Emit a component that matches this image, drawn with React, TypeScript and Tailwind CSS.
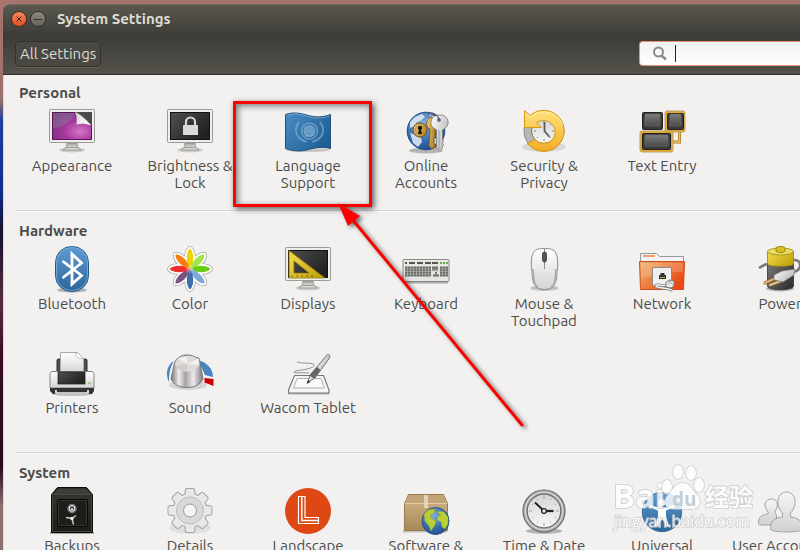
import React from "react";

type Item = { label: string; icon: React.ReactNode };

const Monitor = ({ children }: { children: React.ReactNode }) => (
  <>
    <ellipse cx="24" cy="43" rx="13" ry="2.5" fill="#000" opacity="0.15" />
    <path d="M19 36h10l1 5H18z" fill="url(#stand)" stroke="#8f918d" strokeWidth="0.7" />
    <path d="M15 43c1-2 3-2.5 5-2.5h8c2 0 4 .5 5 2.5z" fill="#dcdedb" stroke="#888a85" strokeWidth="0.8" />
    <rect x="1.5" y="2.5" width="45" height="33" rx="1" fill="#eeeeec" stroke="#999b97" />
    <rect x="4" y="5" width="40" height="28" fill="#1b1b1b" />
    {children}
  </>
);

const appearance = (
  <Monitor>
    <rect x="4.5" y="5.5" width="39" height="27" fill="url(#plum)" stroke="#5c1358" />
    <path d="M5 6h22c-3 9-12 13-22 16z" fill="#8d8aa0" opacity="0.4" />
    <path d="M27 5h17v13z" fill="#4a4a4a" />
    <path d="M27 5c2 4 2 8 1.5 12.5C33 16 38 16.5 43.5 18.5 38 13 33 7 27 5z" fill="url(#paper)" />
  </Monitor>
);

const brightness = (
  <Monitor>
    <rect x="4.5" y="5.5" width="39" height="27" fill="url(#dark)" stroke="#111" />
    <path d="M20 19v-4a4.5 4.5 0 0 1 9 0v4" fill="none" stroke="#d8d8d8" strokeWidth="2.2" />
    <rect x="17" y="18" width="15" height="10" rx="0.6" fill="#dadada" />
  </Monitor>
);

const language = (
  <>
    <ellipse cx="24" cy="43" rx="22" ry="2" fill="#000" opacity="0.18" />
    <path
      d="M1.5 7.5c8-3 16-1 23 1s14 2 22-1v34c-8-2-15-1-22 1s-15 2-23-1z"
      fill="url(#flag)"
      stroke="#1f4f7a"
    />
    <path d="M2.5 8.5c8-3 15-1 22 1s14 2 21-.5" fill="none" stroke="#7fb0d8" strokeWidth="0.8" />
    <g fill="none" stroke="#8db8da" opacity="0.6">
      <circle cx="25.5" cy="24" r="8" strokeWidth="1.4" />
      <circle cx="25.5" cy="24" r="5" strokeWidth="2" />
      <path d="M17.5 24h16M20 18.5l11 11M31 18.5l-11 11" strokeWidth="0.7" />
      <path d="M15 15c-6 8-3 17 8 20M36 15c6 8 3 17-8 20" strokeWidth="1.8" />
    </g>
    <path d="M22 20h6l3 5-3 5h-6l-2-5z" fill="#8db8da" opacity="0.5" />
  </>
);

const online = (
  <>
    <ellipse cx="24" cy="43.5" rx="17" ry="3" fill="#000" opacity="0.25" />
    <circle cx="24" cy="24" r="18.8" fill="url(#globe)" stroke="#204a87" />
    <path
      d="M8 15l5-5 7-3 3 3-5 4-3 1-2 4-5 2zM8 26l6 2 5 3 1 4-4 5-5-4zM27 7l8 3 4 6-5-1-6 2-4-4 5-3zM28 31l8 1-3 6-5 3z"
      fill="#dce7f2"
      opacity="0.9"
    />
    <circle cx="18" cy="23" r="7" fill="url(#gold)" stroke="#6f5014" />
    <circle cx="18" cy="23" r="4.6" fill="none" stroke="#b98f33" />
    <path d="M18 19a2 2 0 0 0-1 3.8L16 27h4l-1-4.2A2 2 0 0 0 18 19z" fill="#1d1608" />
    <path
      d="M30 10c-5 1-7 7-4 11l2 1-1 17 3 3 3-2v-3l-2-1 2-2-2-2 2-2V20z"
      fill="url(#gold)"
      stroke="#735413"
      strokeWidth="0.8"
    />
    <path
      d="M37 8a8 7.5 0 0 0-4 14l1.5 1v18l3 3 3-3v-2l1-1-1-2 1-2-1-2V23l1.5-1A8 7.5 0 0 0 37 8z"
      fill="url(#metal)"
      stroke="#777"
      strokeWidth="0.8"
    />
    <path d="M37 23v19" stroke="#8c8c8c" strokeWidth="0.8" />
    <circle cx="37" cy="13" r="1.9" fill="#5c6a77" />
    <path d="M26 8c2-4 10-2 11 5M29 9c4-2 8 0 8 4" fill="none" stroke="#555" strokeWidth="0.9" />
  </>
);

const security = (
  <>
    <ellipse cx="24" cy="40" rx="22" ry="5" fill="#000" opacity="0.1" />
    <circle cx="24" cy="24" r="20" fill="#b5b7b4" stroke="#888a85" />
    <circle cx="24" cy="24" r="12.5" fill="url(#face)" stroke="#96732a" />
    <path d="M24 14v2M24 32v2M32 24h2M14 24h2M17 31l1-1M31 31l-1-1M31 17l-1 1" stroke="#888" />
    <path d="M24.5 15v9l5 6" fill="none" stroke="#5a5c5a" strokeWidth="1.8" />
    <path
      d="M4.5 3.5v17h17l-5-4.5a11.5 11.5 0 1 1-1.5 16.5l-7.5 4A20.5 20.5 0 1 0 10 8.5z"
      fill="url(#yellow)"
      stroke="#d79a18"
    />
    <path d="M5.8 6.5l4.5 4C22 .5 38 5 42.5 18" fill="none" stroke="#fff0b0" strokeWidth="1" />
  </>
);

const textEntry = (
  <>
    <path d="M35 35h6.500V25" fill="none" stroke="#a17b2c" strokeWidth="3" />
    <path d="M35 35h6.500V25" fill="none" stroke="#f3c35a" strokeWidth="1.5" />
    <rect x="27" y="4" width="20" height="21" rx="2" fill="#e9a92b" stroke="#b5a373" />
    <rect x="2" y="24" width="33" height="21" rx="2" fill="#e9a92b" stroke="#b5a373" />
    <g fill="#3a3a3a" stroke="#202020">
      <rect x="4.5" y="5.5" width="20" height="17" rx="1" />
      <rect x="29.5" y="6.5" width="16" height="16" rx="1" />
      <rect x="4.5" y="26.5" width="28" height="16" rx="1" />
    </g>
    <g fill="url(#key)" stroke="#6e6e6e" strokeWidth="0.7">
      <rect x="7" y="7" width="15" height="12" rx="1" />
      <rect x="32" y="7" width="11" height="12" rx="1" />
      <rect x="7" y="28" width="23" height="11" rx="1" />
    </g>
  </>
);

const bluetooth = (
  <>
    <ellipse cx="24" cy="45" rx="15" ry="2.5" fill="#000" opacity="0.25" />
    <rect x="7.5" y="1.5" width="33" height="45" rx="16" fill="url(#bt)" stroke="#1f5a8e" />
    <rect x="8.5" y="2.5" width="31" height="43" rx="15" fill="none" stroke="#8ab6dd" opacity="0.7" />
    <path d="M14.5 16l19 14.5-9.500 8.500V9l9.500 9-19 15" fill="none" stroke="#fff" strokeWidth="2.8" />
  </>
);

const petals = ["#edd400", "#a5e34a", "#68cc12", "#7fa9d8", "#3f6fb0", "#7b557f", "#ef2f2f", "#f57f0a"];
const petal = "M24 25C19 16 20.5 6 24 3.5C27.5 6 29 16 24 25Z";

const color = (
  <>
    <g fill="#aaa" stroke="#aaa" strokeWidth="5" strokeLinejoin="round">
      {petals.map((c, i) => (
        <path key={c} d={petal} transform={`rotate(${i * 45} 24 24)`} />
      ))}
    </g>
    <g fill="#fff" stroke="#fff" strokeWidth="3.5" strokeLinejoin="round">
      {petals.map((c, i) => (
        <path key={c} d={petal} transform={`rotate(${i * 45} 24 24)`} />
      ))}
    </g>
    {petals.map((c, i) => (
      <path key={c} d={petal} fill={c} transform={`rotate(${i * 45} 24 24)`} />
    ))}
    <circle cx="24" cy="24" r="5" fill="url(#glow)" />
  </>
);

const displays = (
  <Monitor>
    <rect x="4.5" y="5.5" width="39" height="27" fill="url(#dark)" stroke="#111" />
    <path
      d="M5 5.5V33h36zM10 16v12h15z"
      fillRule="evenodd"
      fill="url(#ruler)"
      stroke="#8a7106"
      strokeWidth="0.8"
    />
    <path d="M8 32v-2M13 32v-2M18 32v-2M23 32v-2M28 32v-2" stroke="#6b5800" strokeWidth="0.9" />
  </Monitor>
);

const keyboard = (
  <>
    <path d="M2 37.5h44" stroke="#000" opacity="0.3" strokeWidth="2" />
    <rect x="1" y="14.5" width="46" height="22" rx="1" fill="#e6e7e4" stroke="#8a8c88" />
    <path d="M3 18h2M7 18h6M15 18h6M23 18h6M30 18h6" stroke="#555753" strokeWidth="1.8" />
    <path d="M38 18h2M41 18h2M44 18h2" stroke="#6aa84f" strokeWidth="1.8" />
    <path d="M3 21.5h26v10H3zM38 21.5h8v10h-8zM30 21.5h6v4h-6zM33 27h2v2.5h2v2h-6v-2h2z" fill="#6b6d69" />
    <path d="M3 24h43M3 26.5h43M3 29h43" stroke="#c9cac7" strokeWidth="0.5" />
    <path
      d="M5.5 21v11M8.5 21v11M11.5 21v11M14.5 21v11M17.5 21v11M20.5 21v11M23.5 21v11M26.5 21v11M40.5 21v11M43.5 21v11"
      stroke="#c9cac7"
      strokeWidth="0.5"
    />
  </>
);

const mouse = (
  <>
    <ellipse cx="24.5" cy="43" rx="14" ry="3" fill="#000" opacity="0.2" />
    <path
      d="M24.5 3.5c8 0 11 1.5 12.5 8 1 5 1 10 0 15-.5 5 .5 18-12.5 18S12.5 31.5 12 26.5c-1-5-1-10 0-15 1.5-6.5 4.5-8 12.5-8z"
      fill="url(#shell)"
      stroke="#85878a"
    />
    <path d="M13 24c1 8 0 16 5 18M36 24c-1 8 0 16-5 18" fill="none" stroke="#aaa" strokeWidth="1.5" />
    <path d="M24.5 4v20" stroke="#888" />
    <rect x="22.5" y="7" width="4" height="10" rx="2" fill="#555" stroke="#333" strokeWidth="0.8" />
  </>
);

const network = (
  <>
    <path d="M2.5 20V8.5h16l3 3h24V20z" fill="#f3f3f3" stroke="#999" />
    <path d="M5 11h12" stroke="#f0a070" strokeWidth="2" />
    <path d="M1.5 16.5h45l-1 28h-43z" fill="url(#folder)" stroke="#c8511f" />
    <path d="M3 18h42l-.5 9C30 26 15 32 3 33z" fill="#fff" opacity="0.18" />
    <rect x="14.5" y="22.5" width="19" height="18" rx="1.5" fill="#f0f0ee" stroke="#8b8b88" />
    <path d="M21 34v-4h1.5v-2h4v2H28v4z" fill="#333" />
    <path d="M22 32.5h5" stroke="#b5a64a" />
    <path d="M30 39c-5 4-12-1-12 2s14 1 17 5" fill="none" stroke="#777" strokeWidth="2.8" />
    <path d="M30 39c-5 4-12-1-12 2s14 1 17 5" fill="none" stroke="#f4f4f4" strokeWidth="1.5" />
    <path d="M28 37l4-2 4 1v5l-3 2-5-1z" fill="#ececec" stroke="#777" />
    <path d="M31 36l4 4M34 35l-4 5" stroke="#999" strokeWidth="0.8" />
  </>
);

const power = (
  <>
    <ellipse cx="24" cy="43.5" rx="14" ry="3" fill="#000" opacity="0.25" />
    <path d="M11 19c-4 1-4 2-8 4" fill="none" stroke="#777" strokeWidth="2.5" />
    <path d="M37 15c8-1 10 8 2 12" fill="none" stroke="#777" strokeWidth="2.5" />
    <path d="M11.5 18h26v23c0 5-26 5-26 0z" fill="url(#cell)" stroke="#333" strokeWidth="0.8" />
    <path d="M11.5 6v13c0 3 26 3 26 0V6z" fill="url(#ruler)" stroke="#9b8609" strokeWidth="0.8" />
    <ellipse cx="24.5" cy="6.5" rx="13" ry="3.5" fill="#e8dc66" stroke="#9b8609" strokeWidth="0.8" />
    <path d="M20 3v3c0 2 9 2 9 0V3c0-2-9-2-9 0z" fill="#d9bd21" stroke="#8a7507" strokeWidth="0.8" />
    <path d="M20 33l-11 5M25 36l-11 4" stroke="#9a6a35" strokeWidth="3.2" strokeLinecap="round" />
    <path d="M20 33l-11 5M25 36l-11 4" stroke="#e8bd86" strokeWidth="1.9" strokeLinecap="round" />
    <path d="M18 30l8-4 13-2-1 6-11 7-9-2z" fill="url(#metal)" stroke="#777" strokeWidth="0.8" />
  </>
);

const printers = (
  <>
    <ellipse cx="24" cy="45" rx="20" ry="2" fill="#000" opacity="0.2" />
    <rect x="9" y="10" width="30" height="16" rx="1.5" fill="#4a4c4a" stroke="#2b2b2b" />
    <path d="M12.5 3.5h17l6 6V24h-23z" fill="url(#shell)" stroke="#aaa" />
    <path d="M28 4c-1 4 2 6 7.5 5.5L30 4z" fill="#fff" stroke="#aaa" strokeWidth="0.8" />
    <path d="M3.5 22.5h41l1.5 2V39H2V24.5z" fill="url(#shell)" stroke="#858783" />
    <rect x="10" y="23" width="27" height="12" fill="url(#dark)" stroke="#252525" strokeWidth="0.8" />
    <circle cx="41.5" cy="34" r="1.3" fill="#8bd36a" />
    <path d="M2 39h44v3l-2 3H5l-3-3z" fill="#333" />
    <path d="M8 41v3h32v-3" fill="none" stroke="#f5f5f5" strokeWidth="1.7" />
  </>
);

const sound = (
  <>
    <ellipse cx="22" cy="36" rx="19" ry="5" fill="#000" opacity="0.12" />
    <path d="M3 33C-1 25 1 16 8 12 4 18 3 25 3 33z" fill="#4c83c3" />
    <path d="M32 11c8 2 15 8 15 17l-8-2z" fill="#4c83c3" />
    <path d="M38.5 29l9 1v7l-9-3.5z" fill="#cc0000" />
    <path
      d="M8.5 14C11 8 16 6 21 6c4 0 7 1 9 2.5l3 .5 1 5 3 16c-3 6-9 8.5-16 8.5S8 36 5 30z"
      fill="url(#knob)"
      stroke="#777"
    />
    <path d="M9 15c1-5 6-8 12-8 4 0 7 1 9 2.5h3l.5 6c-3 5-7 7-12.5 7S10 20 9 15z" fill="#dedcda" />
    <path d="M21 15l11-5 1 6zM21 15L12 10l9-3z" fill="#fff" opacity="0.6" />
    <path d="M21 15L10 17c2 4 6 5 11 5z" fill="#c5c1bf" opacity="0.6" />
  </>
);

const wacom = (
  <>
    <path d="M4 44.5h41" stroke="#000" strokeWidth="2" opacity="0.25" />
    <path d="M10.5 26.5h29L45 41v3H4.5v-3z" fill="#f5f5f3" stroke="#777" strokeWidth="1.2" />
    <path d="M13 29.5h24l3.5 9.5H9.5z" fill="#fafafa" stroke="#b0b0b0" />
    <path d="M13 13c6 2 20 0 17 4-3 4-19 4-20 6s8 0 15 1" fill="none" stroke="#888" strokeWidth="0.9" />
    <path d="M23.5 33.5l3-8L42 7c2-3 5-1 3.5 2L31 29z" fill="url(#metal)" stroke="#666" strokeWidth="0.9" />
    <path d="M26 26.5l7-8 3 2.5-6 8z" fill="#666" stroke="#444" strokeWidth="0.6" />
    <path d="M22.5 35l1.5-4 2.5 2z" fill="#333" />
  </>
);

const backups = (
  <>
    <path d="M2 46h44" stroke="#000" strokeWidth="2" opacity="0.3" />
    <path d="M9.5.5h29l6 7v38h-41v-38z" fill="#242420" stroke="#0c0c0b" />
    <path d="M10 1.5h28l5 6H5z" fill="#3d3d39" />
    <rect x="4.5" y="7.5" width="39" height="37" fill="url(#safe)" stroke="#55554f" strokeWidth="0.7" />
    <rect x="9.5" y="12.5" width="30" height="27" rx="1.5" fill="#1d1d1a" stroke="#090909" />
    <rect x="10.5" y="13.5" width="28" height="25" rx="1" fill="none" stroke="#44443f" strokeWidth="0.6" />
    <circle cx="24" cy="21.5" r="4.3" fill="#555" stroke="#999" strokeWidth="0.8" />
    <circle cx="24" cy="21.5" r="2.6" fill="#181818" stroke="#ddd" strokeWidth="1.3" />
    <circle cx="24" cy="22" r="1.1" fill="#fff" />
    <path d="M24 31.5l-6-1M24 31.5l4-3M24 31.5l1.5 6" stroke="#c8c8c8" strokeWidth="1.5" />
    <circle cx="24" cy="31.5" r="1.7" fill="#eee" />
  </>
);

const teeth = [0, 45, 90, 135, 180, 225, 270, 315];

const details = (
  <>
    <ellipse cx="24" cy="41" rx="21" ry="6" fill="#000" opacity="0.07" />
    <g fill="#e8e8e7" stroke="#a6a6a5" strokeWidth="2" strokeLinejoin="round">
      {teeth.map((a) => (
        <path key={a} d="M19 9l1-6.500 1-.5h6l1 .5 1 6.500z" transform={`rotate(${a} 24 23.5)`} />
      ))}
      <circle cx="24" cy="23.5" r="16.5" />
    </g>
    <g fill="#e8e8e7">
      {teeth.map((a) => (
        <path key={a} d="M19 11l1-8.500 1-.5h6l1 .5 1 8.500z" transform={`rotate(${a} 24 23.5)`} />
      ))}
      <circle cx="24" cy="23.5" r="16.5" />
    </g>
    <circle cx="24" cy="23.5" r="13.5" fill="#d9d9d8" stroke="#bcbcbb" />
    <circle cx="24" cy="23.5" r="6.5" fill="#f5f5f4" stroke="#9b9b9a" />
  </>
);

const landscape = (
  <>
    <circle cx="24" cy="24" r="23" fill="#dd4814" />
    <path d="M14.5 9.5H21v21h13.5v6h-20z" fill="none" stroke="#fff" strokeWidth="1.2" />
    <path d="M17.8 10v23.5H34" fill="none" stroke="#fff" strokeWidth="1.5" />
  </>
);

const software = (
  <>
    <path d="M1 44h44" stroke="#000" strokeWidth="3" opacity="0.2" />
    <path d="M6.5 7.5h35l4 9v27h-43v-27z" fill="url(#box)" stroke="#9b7b4e" />
    <path d="M6.5 8h35l3.5 8.5H3z" fill="#c3a378" />
    <path d="M3 16.5h42" stroke="#e3cba4" />
    <path d="M22 8h4v13h-4z" fill="#e6d8bd" opacity="0.9" />
    <circle cx="33.5" cy="34" r="13.5" fill="url(#globe)" stroke="#234f87" />
    <path
      d="M22 27l4-4 7-1-1 4-4 2 1 3 5 3-1 4-4 6-2-5-4-5zM37 24l5 1 4 5v7l-3 5-3-2-1-5-4-2 1-4 3-1-3-2z"
      fill="#b9cf35"
      stroke="#8aa51f"
      strokeWidth="0.5"
    />
  </>
);

const time = (
  <>
    <ellipse cx="24" cy="44" rx="18" ry="3" fill="#000" opacity="0.25" />
    <circle cx="24" cy="24" r="21" fill="#a8aaa8" stroke="#6a6c6a" strokeWidth="1.2" />
    <circle cx="24" cy="24" r="18.8" fill="none" stroke="#d0d1d0" strokeWidth="1.5" />
    <circle cx="24" cy="24" r="16.8" fill="url(#face)" stroke="#6c6e6c" strokeWidth="1.2" />
    <path
      d="M24 9v3M24 36v3M9 24h3M36 24h3M17 12l.7 1M31 12l-.7 1M36 17l-1 .7M12 17l1 .7M12 31l1-.7M36 31l-1-.7M17 36l.7-1M31 36l-.7-1"
      stroke="#999"
    />
    <path d="M24 24l-9-8.500" stroke="#222" strokeWidth="1.9" />
    <path d="M24 24h9.500" stroke="#222" strokeWidth="2.3" />
    <circle cx="24" cy="24" r="2.3" fill="#eee" stroke="#222" strokeWidth="1.3" />
  </>
);

const universal = (
  <>
    <circle cx="24" cy="25" r="19.7" fill="url(#bt)" stroke="#2a5f96" strokeWidth="0.8" />
    <circle cx="24" cy="15.5" r="3.3" fill="#fff" />
    <path
      d="M12 18l8 2.5h8l8-2.5.5 2-8.500 3.500v6l3 9.500-2.500 1L24 31l-4.500 9-2.500-1 3-9.500v-6L11.500 20z"
      fill="#fff"
    />
  </>
);

const users = (
  <g fill="url(#gear)" stroke="#a2a2a1">
    <path d="M2.5 36c0-6 3-8 9-9 1 0 1-1 0-3-5-6-2-12 4-12s8 6 3 13l2 3v10H5c-2 0-2.5-1-2.5-2z" />
    <path d="M14.5 42c0-8 4-11 12-12v-4c-8-8-5-21 4-21s12 13 4 21v4c8 1 12 4 12 12 0 4-32 4-32 0z" />
  </g>
);

const sections: { title: string; items: Item[] }[] = [
  {
    title: "Personal",
    items: [
      { label: "Appearance", icon: appearance },
      { label: "Brightness & Lock", icon: brightness },
      { label: "Language Support", icon: language },
      { label: "Online Accounts", icon: online },
      { label: "Security & Privacy", icon: security },
      { label: "Text Entry", icon: textEntry },
    ],
  },
  {
    title: "Hardware",
    items: [
      { label: "Bluetooth", icon: bluetooth },
      { label: "Color", icon: color },
      { label: "Displays", icon: displays },
      { label: "Keyboard", icon: keyboard },
      { label: "Mouse & Touchpad", icon: mouse },
      { label: "Network", icon: network },
      { label: "Power", icon: power },
      { label: "Printers", icon: printers },
      { label: "Sound", icon: sound },
      { label: "Wacom Tablet", icon: wacom },
    ],
  },
  {
    title: "System",
    items: [
      { label: "Backups", icon: backups },
      { label: "Details", icon: details },
      { label: "Landscape Service", icon: landscape },
      { label: "Software & Updates", icon: software },
      { label: "Time & Date", icon: time },
      { label: "Universal Access", icon: universal },
      { label: "User Accounts", icon: users },
    ],
  },
];

// id, start colour, end colour, vertical
const linear: [string, string, string, boolean][] = [
  ["stand", "#9a9c99", "#e8e9e7", true],
  ["paper", "#cfcfcf", "#ffffff", false],
  ["shell", "#ffffff", "#d2d3d2", true],
  ["flag", "#4c8cc4", "#1f6096", false],
  ["gold", "#f0cf7c", "#b78628", false],
  ["metal", "#fdfdfd", "#b9bbb9", false],
  ["yellow", "#ffe27a", "#f2ac26", true],
  ["face", "#d5d6d4", "#f7f7f6", true],
  ["key", "#7c7c7c", "#4a4a4a", true],
  ["bt", "#5f9bd3", "#2a6699", true],
  ["ruler", "#f3dc4c", "#c4a512", false],
  ["folder", "#efb069", "#ea4a12", false],
  ["cell", "#777777", "#333333", false],
  ["safe", "#33332f", "#1c1c19", true],
  ["gear", "#f6f6f6", "#d0d0cf", true],
  ["box", "#d3b78d", "#a98756", true],
  ["dark", "#505050", "#222222", false],
];

function Gradients() {
  return (
    <svg className="absolute h-0 w-0" aria-hidden="true">
      <defs>
        {linear.map(([id, from, to, vertical]) => (
          <linearGradient key={id} id={id} x1="0" y1="0" x2={vertical ? 0 : 1} y2={vertical ? 1 : 0.6}>
            <stop offset="0" stopColor={from} />
            <stop offset="1" stopColor={to} />
          </linearGradient>
        ))}
        <linearGradient id="knob">
          <stop offset="0" stopColor="#777" />
          <stop offset="0.25" stopColor="#eee" />
          <stop offset="0.45" stopColor="#a5a1a1" />
          <stop offset="0.7" stopColor="#f0e8f0" />
          <stop offset="1" stopColor="#777" />
        </linearGradient>
        <radialGradient id="plum" cx="0.7" cy="0.7" r="0.8">
          <stop offset="0" stopColor="#d277c6" />
          <stop offset="0.5" stopColor="#a8389f" />
          <stop offset="1" stopColor="#74337a" />
        </radialGradient>
        <radialGradient id="globe" cx="0.4" cy="0.3" r="0.8">
          <stop offset="0" stopColor="#86b0dd" />
          <stop offset="0.6" stopColor="#3269ad" />
          <stop offset="1" stopColor="#1f4882" />
        </radialGradient>
        <radialGradient id="glow">
          <stop offset="0" stopColor="#fff" stopOpacity="0.5" />
          <stop offset="1" stopColor="#fff" stopOpacity="0" />
        </radialGradient>
      </defs>
    </svg>
  );
}

function SettingsItem({ label, icon }: Item) {
  return (
    <button type="button" className="flex min-h-[84px] flex-col items-center gap-0.5">
      <svg viewBox="0 0 48 48" className="h-12 w-12 shrink-0" aria-hidden="true">
        {icon}
      </svg>
      <span className="max-w-[104px] text-center text-[15px] leading-[17px]">{label}</span>
    </button>
  );
}

function Annotation() {
  return (
    <>
      <div className="pointer-events-none absolute top-[101px] left-[233px] h-[106px] w-[139px] border-[3px] border-[#fe0000] shadow-[2px_2px_6px_rgba(0,0,0,0.65),inset_2px_2px_6px_rgba(0,0,0,0.5)]" />
      <svg
        viewBox="0 0 200 240"
        className="pointer-events-none absolute top-[196px] left-[332px] h-[240px] w-[200px] drop-shadow-[3px_2px_2px_rgba(0,0,0,0.55)]"
        aria-hidden="true"
      >
        <path d="M20 23L190 229" stroke="#fe0000" strokeWidth="3" strokeLinecap="round" />
        <path d="M6 7L28 20L16 30Z" fill="#fe0000" />
      </svg>
    </>
  );
}

function Watermark() {
  return (
    <svg
      viewBox="0 0 150 80"
      className="pointer-events-none absolute top-[460px] left-[610px] h-20 w-[150px] font-['Open_Sans','Noto_Sans_CJK_SC',sans-serif]"
      aria-hidden="true"
    >
      <g fill="#fff" stroke="#c4c4c4" strokeWidth="1.6" paintOrder="stroke" opacity="0.8">
        <text x="3" y="48" fontSize="33" fontWeight="700">
          Bai
        </text>
        <ellipse cx="57" cy="27" rx="5" ry="7" />
        <ellipse cx="68" cy="12" rx="5" ry="7" />
        <ellipse cx="81" cy="13" rx="5" ry="7" />
        <ellipse cx="89" cy="25" rx="5" ry="7" />
        <path d="M73 23c8 0 9 7 14 12 6 7 2 14-5 14H64c-8 0-12-7-6-14 5-5 7-12 15-12z" />
        <text x="95" y="46" fontSize="24" fontWeight="700">
          经验
        </text>
        <text x="4" y="67" fontSize="16">
          jingyan.baidu.com
        </text>
      </g>
      <text x="62" y="46" fontSize="19" fontWeight="700" fill="#c3cdd6">
        du
      </text>
    </svg>
  );
}

export default function App() {
  return (
    <div className="relative h-screen overflow-hidden bg-[linear-gradient(to_bottom,#a8746c_0%,#9c706c_18%,#1b3f9a_22%,#10308a_35%,#14102e_42%,#5a2a40_55%,#3a0a26_65%,#2a0820_85%,#8c7070_92%)] pt-1 pl-[3px] font-['Ubuntu','Noto_Sans','Open_Sans',sans-serif] text-[#4c4c4c]">
      <Gradients />
      <div className="flex h-full flex-col rounded-tl-md bg-[#f2f1f0]">
        <header className="shrink-0 rounded-tl-md border-b border-[#33322e] text-[#dfdbd2]">
          <div className="flex h-[29px] items-center gap-[3px] rounded-tl-md border-t border-[#6b6962] bg-linear-to-b from-[#5a584f] to-[#403f3a] pl-2">
            <button
              type="button"
              aria-label="Close"
              className="flex h-4 w-4 items-center justify-center rounded-full border border-[#50281a] bg-linear-to-b from-[#f4885f] to-[#e2511f]"
            >
              <svg viewBox="0 0 8 8" className="h-2 w-2" aria-hidden="true">
                <path d="M1.5 1.5l5 5M6.5 1.5l-5 5" stroke="#3c1a0e" strokeWidth="1" />
              </svg>
            </button>
            <button
              type="button"
              aria-label="Minimize"
              className="flex h-4 w-4 items-center justify-center rounded-full border border-[#33322e] bg-linear-to-b from-[#8e8b83] to-[#65635c]"
            >
              <span className="h-px w-2 bg-[#33322e]" />
            </button>
            <h1 className="ml-2 text-[15px] leading-4 font-bold">System Settings</h1>
          </div>
          <div className="flex h-[41px] items-center justify-between bg-linear-to-b from-[#3c3b37] to-[#53514a] pl-3">
            <button
              type="button"
              className="h-[26px] rounded border border-[#33322d] bg-[#494842] px-1 text-[15px] leading-[17px] shadow-[0_1px_0_#63615a]"
            >
              All Settings
            </button>
            <div className="flex h-[25px] w-[161px] items-center rounded-l border border-r-0 border-[#e59473] bg-linear-to-b from-[#f2f2f2] to-white pl-3">
              <svg viewBox="0 0 16 16" className="h-4 w-4 shrink-0" aria-hidden="true">
                <circle cx="6.5" cy="6" r="4.5" fill="none" stroke="#8c8c8c" strokeWidth="2" />
                <path d="M9.5 9.5l4.5 4" stroke="#8c8c8c" strokeWidth="2.5" />
              </svg>
              <span className="ml-[7px] h-[17px] w-px shrink-0 bg-[#222]" />
              <input
                type="text"
                aria-label="Search settings"
                className="w-full min-w-0 bg-transparent text-[15px] text-[#4c4c4c] outline-none"
              />
            </div>
          </div>
        </header>
        <main className="min-h-0 flex-1 overflow-hidden border-l border-[#dcd8d5] pt-[9px]">
          {sections.map(({ title, items }, i) => (
            <section key={title} className="pb-[19px]">
              {i > 0 && <div className="mb-2.5 ml-3 h-0.5 border-t border-[#d9d7d5] bg-[#fafafa]" />}
              <h2 className="pl-[15px] text-[15px] leading-[17px] font-bold">{title}</h2>
              <div className="mt-1.5 grid grid-cols-[repeat(7,118px)] gap-y-5 pl-[9px]">
                {items.map((item) => (
                  <SettingsItem key={item.label} {...item} />
                ))}
              </div>
            </section>
          ))}
        </main>
      </div>
      <Annotation />
      <Watermark />
    </div>
  );
}
